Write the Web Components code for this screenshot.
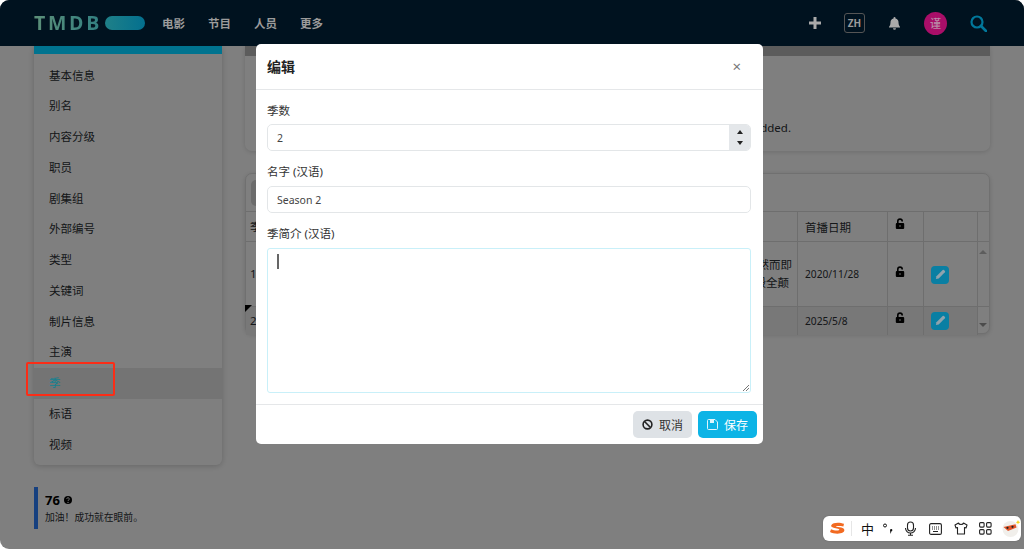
<!DOCTYPE html>
<html lang="zh"><head><meta charset="utf-8"><title>编辑</title>
<style>
html,body{margin:0;height:549px;overflow:hidden;background:#fff}
body{font-family:"Noto Sans","Noto Sans CJK SC",sans-serif;font-size:11.5px;color:#2b2f33}
</style></head><body>
<app-shell>
  <site-header></site-header>
  <side-column slot="side"></side-column>
  <main-column slot="main"></main-column>
  <edit-modal slot="over"></edit-modal>
  <ime-bar slot="top"></ime-bar>
</app-shell>
<script>
const I={
 lock:'<svg width="10" height="11" viewBox="0 0 10 11"><path d="M2 5V3.200a3 2.900 0 0 1 6 0v.4H6.400v-.4a1.400 1.300 0 0 0-2.800 0V5z" fill="#000"/><rect x=".8" y="5" width="8.400" height="6" rx="1" fill="#000"/><rect x="4.200" y="7" width="1.600" height="2" fill="#888"/></svg>',
 pen:'<svg width="11" height="11" viewBox="0 0 12 12"><path d="M1 11l.6-3L8.400 1.200a1 1 0 0 1 1.400 0l1 1a1 1 0 0 1 0 1.400L4 10.400z" fill="#8fa3ad"/></svg>'
};
function def(name,html){customElements.define(name,class extends HTMLElement{
  constructor(){super();const r=this.attachShadow({mode:'open'});r.innerHTML=typeof html==='function'?html(this):html;}
});}

def('app-shell',`<style>
:host{display:block;position:relative;width:1024px;height:549px;overflow:hidden;border-radius:9px 9px 0 9px;background:#fff}
.body{display:flex;gap:23px;padding:0 34px}
.side{display:block;width:188px;flex:none}
.main{display:block;flex:1;min-width:0}
.shade{position:absolute;inset:0;background:rgba(0,0,0,.5);padding:44px 0 0 256px;box-sizing:border-box}
.mark{position:absolute;left:26px;top:362px;width:89px;height:34px;box-sizing:border-box;border:2px solid #fb2d17;border-radius:2px}
</style><slot></slot><div class="body"><div class="side"><slot name="side"></slot></div><div class="main"><slot name="main"></slot></div></div>
<div class="shade"><slot name="over"></slot></div><div class="mark"></div><slot name="top"></slot>`);

def('site-header',`<style>
:host{display:flex;position:relative;z-index:1;align-items:center;height:46px;background:#00121f;padding:0 34px;box-sizing:border-box;color:#9b9b9b;font-weight:700;font-size:11.5px}
.logo{font-size:19.5px;font-weight:700;letter-spacing:2.7px;font-family:"Open Sans","Noto Sans",sans-serif;background:linear-gradient(90deg,#5c8f78,#2f7f82);-webkit-background-clip:text;background-clip:text;color:transparent;width:71px;line-height:46px;white-space:nowrap;overflow:hidden}
.pill{width:40px;height:14px;border-radius:7px;background:linear-gradient(90deg,#1f8088,#03708f);margin-right:17px}
nav{display:flex;gap:23px}
.r{margin-left:auto;display:flex;align-items:center}
.zh{width:21px;height:20px;box-sizing:border-box;border:1px solid #555;border-radius:3px;font-size:10px;display:flex;align-items:center;justify-content:center;margin:0 0 0 23px}
.av{width:23px;height:23px;border-radius:50%;background:#a90e68;color:#b98aa6;font-size:11px;display:flex;align-items:center;justify-content:center;margin-left:24px;font-weight:500}
svg{display:block}
</style><div class="logo">TMDB</div><div class="pill"></div>
<nav><span>电影</span><span>节目</span><span>人员</span><span>更多</span></nav>
<div class="r">
<svg width="12" height="12" viewBox="0 0 12 12"><path d="M4.500 0h3v4.500H12v3H7.500V12h-3V7.500H0v-3h4.500z" fill="#aaa"/></svg>
<div class="zh">ZH</div>
<svg style="margin-left:24px" width="11" height="13" viewBox="0 0 11 13"><path d="M5.500 0a1 1 0 0 1 1 1v.5A4 4 0 0 1 9.500 5.500c0 3 1.500 4 1.500 4.500v.5H0V10c0-.5 1.500-1.500 1.500-4.500A4 4 0 0 1 4.500 1.500V1a1 1 0 0 1 1-1zM4 11.300h3a1.500 1.500 0 0 1-3 0z" fill="#aaa"/></svg>
<div class="av">谨</div>
<svg style="margin:0 3px 0 23px" width="17" height="17" viewBox="0 0 17 17"><circle cx="7" cy="7" r="5.500" fill="none" stroke="#00779a" stroke-width="2.200"/><path d="M11 11l5 5" stroke="#00779a" stroke-width="2.600" stroke-linecap="round"/></svg>
</div>`);

const items=['基本信息','别名','内容分级','职员','剧集组','外部编号','类型','关键词','制片信息','主演','季','标语','视频'];
def('side-column',`<style>
:host{display:block}
.card{background:#fff;border-radius:0 0 6px 6px;box-shadow:0 1px 6px rgba(0,0,0,.2);overflow:hidden}
.top{height:8px;background:#00738f;position:relative;z-index:1}
.list{padding:6.500px 0 4.500px}
.i{height:30.77px;line-height:30.77px;padding-left:15px}
.on{background:#e9e9e9}
.on span{position:relative;z-index:1;color:#14808f}
.stat{margin-top:22px;height:42px;border-left:4px solid #2c80ff;padding-left:7px;box-sizing:border-box}
.n{font-size:13px;font-weight:700;color:#000;line-height:20px;display:flex;align-items:center;gap:4px;padding-top:3px}
.t{line-height:17px;margin-top:-1px;font-size:9.800px}
svg{display:block}
</style><div class="card"><div class="top"></div><div class="list">${items.map(t=>`<div class="i${t==='季'?' on':''}"><span>${t}</span></div>`).join('')}</div></div>
<div class="stat"><div class="n">76 <svg width="8" height="8" viewBox="0 0 8 8"><circle cx="4" cy="4" r="4" fill="#000"/><path d="M2.700 3a1.300 1.200 0 1 1 2 1c-.4.200-.7.400-.7.900" stroke="#fff" fill="none" stroke-width="1"/><circle cx="4" cy="6.400" r=".6" fill="#fff"/></svg></div><div class="t">加油！成功就在眼前。</div></div>`);

def('main-column',`<style>
:host{display:block}
.c{background:#fff;border-radius:0 0 7px 7px;box-shadow:0 1px 5px rgba(0,0,0,.15);overflow:hidden}
.a{height:105px;margin-bottom:22px}
.g{height:10px;background:#b9b9b9}
.msg{margin-top:65px;text-align:right;padding-right:199px;line-height:14px;white-space:nowrap}
.b{border-radius:7px;border:1px solid #e0e0e0;box-sizing:border-box;height:161px;position:relative;overflow:visible}
.tb{height:38px;padding:6px 5px;box-sizing:border-box;border-bottom:1px solid #dcdcdc}
.tb i{display:block;width:60px;height:26px;border-radius:5px;background:#d8d8d8}
.r{display:grid;grid-template-columns:552px 90px 36px 54px 11px;border-bottom:1px solid #dcdcdc}
.r>div{border-right:1px solid #dcdcdc;padding:0 7px;box-sizing:border-box;display:flex;align-items:center;font-size:10.200px}
.r>div:last-child{border:0;padding:0}
.r.h>div:nth-child(2){font-size:11.500px}
.h{height:29px}.r1{height:64px}.r2{height:28px;border-bottom:0}
.r2>div:not(:last-child){background:#f0f0f0}
.r>.f{justify-content:space-between;padding:0 5px 0 4px;line-height:18px;font-size:11.500px}
.f b{font-weight:400;text-align:right}
.f em{font-style:normal;padding-right:3px}
.r>.lk{padding:0 0 0 7px}
.lk svg{display:block;margin-top:-6px}
.r2 .lk svg{margin-top:-8px}
.ed{width:18px;height:18px;border-radius:4px;background:#0a7fa3;display:flex;align-items:center;justify-content:center;margin-top:1px;position:relative;z-index:1}
.sb{position:relative}
.ar{width:0;height:0;border:4px solid transparent;position:absolute;left:1px}
.tri{position:absolute;left:-1px;top:131px;width:0;height:0;border-top:7px solid #000;border-right:7px solid transparent}
</style>
<div class="c a"><div class="g"></div><div class="msg">This season has not been added.</div></div>
<div class="c b"><div class="tb"><i></i></div>
<div class="r h"><div class="f">季</div><div>首播日期</div><div class="lk">${I.lock}</div><div></div><div></div></div>
<div class="r r1"><div class="f"><span>1</span><b>一切看似平静，然而即<br><em>将到来的危机足以毁全颠</em></b></div><div>2020/11/28</div><div class="lk">${I.lock}</div><div><span class="ed">${I.pen}</span></div><div class="sb"><span class="ar" style="top:8px;border-bottom:4px solid #bbb;border-top:0"></span></div></div>
<div class="r r2"><div class="f"><span>2</span></div><div>2025/5/8</div><div class="lk">${I.lock}</div><div><span class="ed" style="margin-top:-1px">${I.pen}</span></div><div class="sb"><span class="ar" style="top:16px;border-top:4px solid #999;border-bottom:0"></span></div></div>
<div class="tri"></div></div>`);

def('form-field',h=>`<style>
:host{display:block}
label{display:block;line-height:14px;margin-bottom:7px;font-size:11.500px;color:#333}
</style><label>${h.getAttribute('label')}</label><slot></slot>`);

def('text-box',h=>`<style>
:host{display:flex;align-items:center;height:${h.getAttribute('h')||27}px;box-sizing:border-box;border:1px solid #e3e6e8;border-radius:5px;padding-left:9px;font-size:10.500px;color:#444;position:relative;overflow:hidden}
.sp{position:absolute;right:0;top:0;bottom:0;width:21px;background:#e4e7ea;display:flex;flex-direction:column;align-items:center;justify-content:center;gap:7px}
.sp i{width:0;height:0;border:3.500px solid transparent}
.u{border-bottom:4px solid #222!important;border-top:0!important}.d{border-top:4px solid #222!important;border-bottom:0!important}
</style><slot></slot>${h.hasAttribute('spin')?'<div class="sp"><i class="u"></i><i class="d"></i></div>':''}`);

def('note-box',`<style>
:host{display:block;height:145px;box-sizing:border-box;border:1px solid #c9f0f9;border-radius:3px;position:relative;padding:5px 9px}
.car{width:1.500px;height:15px;background:#666}
svg{position:absolute;right:1px;bottom:1px}
</style><div class="car"></div><svg width="7" height="7" viewBox="0 0 7 7"><path d="M7 1L1 7M7 4L4 7" stroke="#777" stroke-width="1"/></svg>`);

def('act-btn',h=>`<style>
:host{display:flex;align-items:center;justify-content:center;gap:6px;width:59px;height:27px;border-radius:5px;font-size:12px;background:${h.getAttribute('bg')};color:${h.getAttribute('fg')}}
svg{display:block}
</style><slot name="i"></slot><slot></slot>`);

def('edit-modal',`<style>
:host{position:relative;z-index:2;width:507px;height:400px;background:#fff;border-radius:5px;overflow:hidden;display:flex;flex-direction:column}
header{height:46px;box-sizing:border-box;border-bottom:1px solid #e5e7e9;display:flex;align-items:center;justify-content:space-between;padding:0 22px 2px 11px;font-size:14px;font-weight:700;color:#222}
header span{font-weight:400;font-size:15px;color:#777;line-height:1;margin-top:2px}
.body{flex:1;padding:14px 12px 0 11px;display:flex;flex-direction:column}
text-box[spin]{margin-top:-1px}
form-field:nth-child(2){margin-top:14px}
form-field:nth-child(3){margin-top:14px}
footer{height:40px;box-sizing:border-box;border-top:1px solid #e5e7e9;display:flex;justify-content:flex-end;gap:6px;padding:6px 6px 0 0}
</style>
<header>编辑<span>×</span></header>
<div class="body">
<form-field label="季数"><text-box spin>2</text-box></form-field>
<form-field label="名字 (汉语)"><text-box>Season 2</text-box></form-field>
<form-field label="季简介 (汉语)"><note-box></note-box></form-field>
</div>
<footer>
<act-btn bg="#dee2e6" fg="#333"><svg slot="i" width="11" height="11" viewBox="0 0 11 11"><circle cx="5.500" cy="5.500" r="4.400" fill="none" stroke="#222" stroke-width="1.600"/><path d="M2.500 2.500l6 6" stroke="#222" stroke-width="1.600"/></svg>取消</act-btn>
<act-btn bg="#0db4e6" fg="#fff"><svg slot="i" width="11" height="11" viewBox="0 0 11 11"><path d="M1.500.5h6.500l2.500 2.500v6.500a1 1 0 0 1-1 1h-8a1 1 0 0 1-1-1v-8a1 1 0 0 1 1-1z" fill="none" stroke="#dff5fc" stroke-width="1"/><rect x="3" y="1" width="4" height="3" fill="#dff5fc"/></svg>保存</act-btn>
</footer>`);

def('ime-bar',`<style>
:host{position:absolute;left:823px;top:516px;width:198px;height:25px;background:#fff;border-radius:6px;display:flex;align-items:center;color:#111;box-shadow:0 0 2px rgba(0,0,0,.2)}
svg{display:block;flex:none}
.z{font-size:13px;margin-left:9px;width:15px;line-height:1;font-family:"Noto Sans CJK SC",sans-serif}
.s{width:1px;height:15px;background:#e6e6e6;margin-left:6px}
</style>
<svg style="margin-left:7px" width="15" height="13" viewBox="0 0 15 13"><path d="M14 1.800C10 .2 3 0 1.300 3.200.4 5.500 5 6.200 8 6.700c1.600.3 1.800 1.200.8 1.500-2 .5-5.300.1-7.800-1L0 10c3 1.800 9.500 2.400 12.800.6 2.700-1.700 1.700-4.300-1.500-5-2-.5-5-.6-5.300-1-.3-.6 4-.7 7.400 0z" fill="#f26a21"/></svg>
<div class="s"></div><div class="z">中</div>
<svg style="margin-left:7px" width="12" height="14" viewBox="0 0 12 14"><circle cx="3" cy="3.500" r="1.500" fill="none" stroke="#111"/><path d="M8 8a1.200 1.200 0 1 1 1.500 1.300L8.500 12z" fill="#111"/></svg>
<svg style="margin-left:10px" width="13" height="15" viewBox="0 0 13 15"><rect x="3.500" y="1" width="6" height="9" rx="3" fill="none" stroke="#222" stroke-width="1.100"/><path d="M1.500 7a5 5 0 0 0 10 0M6.500 12v2M4 14.300h5" fill="none" stroke="#222" stroke-width="1.100"/></svg>
<svg style="margin-left:12px" width="13" height="12" viewBox="0 0 13 12"><rect x=".6" y=".6" width="11.800" height="10.800" rx="1.500" fill="none" stroke="#222" stroke-width="1.100"/><path d="M3 4h7M3 6h7" stroke="#222" stroke-dasharray="1 1"/><path d="M4 8.500h5" stroke="#222"/></svg>
<svg style="margin-left:12px" width="14" height="13" viewBox="0 0 14 13"><path d="M4.500 1L1 3l1 3 1.500-.5V12h7V5.500L12 6l1-3-3.500-2c-.5 2-4.500 2-5 0z" fill="none" stroke="#222" stroke-width="1.100" stroke-linejoin="round"/></svg>
<svg style="margin-left:11px" width="13" height="13" viewBox="0 0 13 13"><g fill="none" stroke="#222" stroke-width="1.100"><rect x=".6" y=".6" width="4.500" height="4.500" rx="1"/><rect x="7.600" y=".6" width="4.500" height="4.500" rx="1"/><rect x=".6" y="7.600" width="4.500" height="4.500" rx="1"/><rect x="7.600" y="7.600" width="4.500" height="4.500" rx="1"/></g></svg>
<svg style="margin-left:10px" width="19" height="17" viewBox="0 0 19 17"><circle cx="8.500" cy="9" r="8" fill="#f1efeb"/><path d="M1.500 7l12-2.800 1 3.300-8.500 3.500z" fill="#e2552a"/><circle cx="5.500" cy="7.800" r="1.100" fill="#222"/><circle cx="10.500" cy="6.800" r="1.100" fill="#222"/><path d="M16 0l.7 1.600 1.700.6-1.700.7-.7 1.600-.7-1.600-1.600-.7 1.600-.6z" fill="#f7d21c"/></svg>`);
</script>
</body></html>
